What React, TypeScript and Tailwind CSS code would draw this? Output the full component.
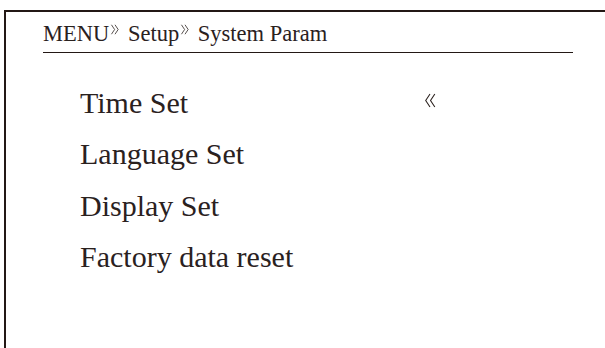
import React from 'react';

const items = ['Time Set', 'Language Set', 'Display Set', 'Factory data reset'];

// thin double chevron, like the CJK angle quotes on the device screen
const Chevrons: React.FC<{ dir: 'left' | 'right'; className: string }> = ({ dir, className }) => (
  <svg viewBox="0 0 11 14" className={className} fill="none" stroke="currentColor" strokeWidth="1">
    {dir === 'right' ? (
      <>
        <polyline points="1,1 5,7 1,13" />
        <polyline points="5.5,1 9.5,7 5.5,13" />
      </>
    ) : (
      <>
        <polyline points="5.5,1 1.5,7 5.5,13" />
        <polyline points="10,1 6,7 10,13" />
      </>
    )}
  </svg>
);

const App: React.FC = () => {
  return (
    <div className="w-[605px] h-[348px] bg-white overflow-hidden pt-[10px] pl-[4px] text-[#2a211e] font-['Liberation_Serif',serif]">
      <div className="h-[400px] w-[640px] border-t-2 border-l-2 border-[#231815]">
        <div className="ml-[37px] w-[530px] h-[41px] border-b border-[#231815] pt-[11px]">
          <div className="text-[22.5px] leading-[22px] whitespace-pre">
            MENU<Chevrons dir="right" className="inline-block w-[10px] h-[11px] ml-[1px] mr-[2px] align-[6px]" />
            {' '}Setup<Chevrons dir="right" className="inline-block w-[10px] h-[11px] ml-[1px] mr-[2px] align-[6px]" />
            {' '}System Param
          </div>
        </div>
        <div className="ml-[74px] mt-[24px] flex flex-col">
          {items.map((item, i) => (
            <div key={item} className="flex leading-[51px] h-[51.3px]">
              <span className="w-[344px] text-[30px]">{item}</span>
              {i === 0 && <Chevrons dir="left" className="w-[12px] h-[15px] mt-[16px]" />}
            </div>
          ))}
        </div>
      </div>
    </div>
  );
};

export default App;
